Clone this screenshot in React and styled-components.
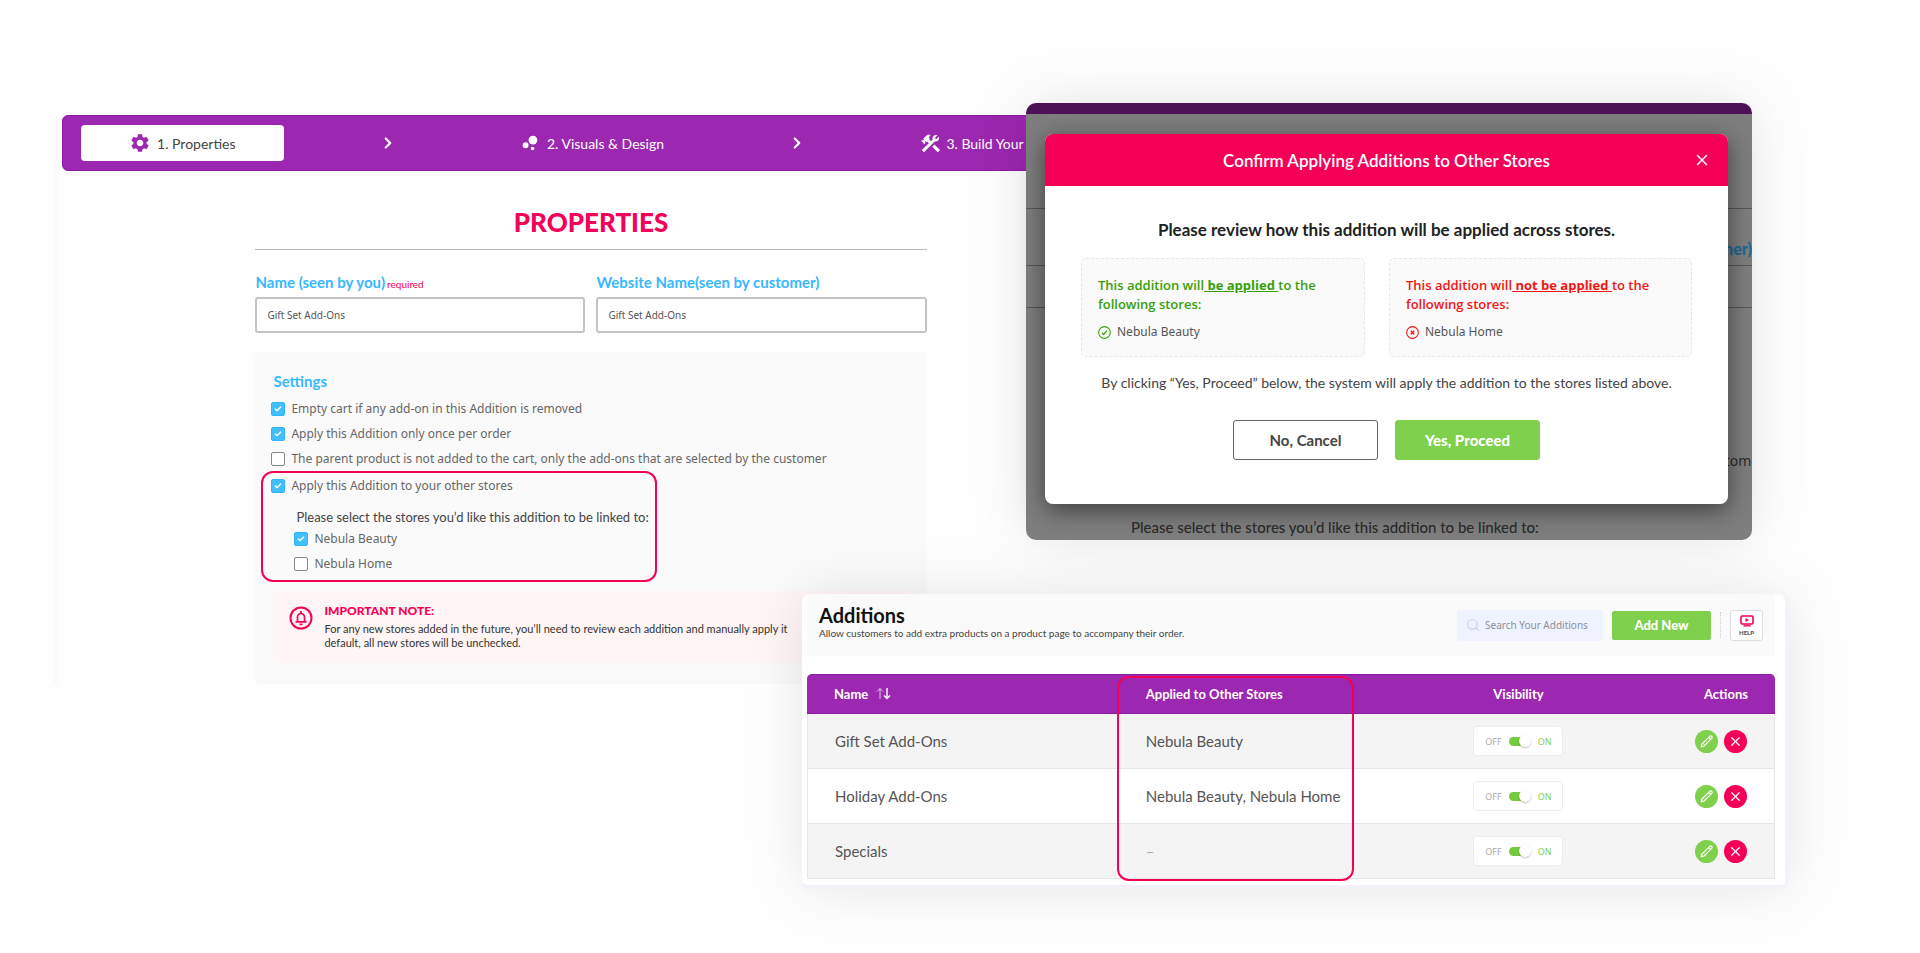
import React, { useState } from 'react';
import styled, { createGlobalStyle, css } from 'styled-components';
import { MdSettings, MdBubbleChart } from 'react-icons/md';
import { Check, ChevronRight, Search, X } from 'lucide-react';

const GlobalStyle = createGlobalStyle`
	* {
		box-sizing: border-box;
	}

	body {
		margin: 0;
		background: #fefefe;
		color: #444;
		font-family: Lato, 'Liberation Sans', sans-serif;
	}

	h1,
	h2,
	h3,
	p {
		margin: 0;
	}

	button,
	input {
		font-family: inherit;
	}
`;

const ui = "'Noto Sans', 'Open Sans', sans-serif";
const pink = '#f50057';
const purple = '#9c27b0';
const blue = '#38b8ff';
const green = '#7ed04d';

/* The three windows share one grid so that they can overlap. */
const Collage = styled.main`
	display: grid;
	grid-template-columns: 53fr 749fr 224fr 94fr 632fr 37fr 131fr;
	grid-template-rows: auto auto;
	row-gap: 54px;
	align-items: start;
	padding: 103px 0 64px;
	overflow: hidden;
`;

/* ---------- Properties ---------- */

const PropertiesPanel = styled.section`
	grid-column: 2 / 5;
	grid-row: 1 / 3;
	margin-top: 12px;
	padding: 0 0 2px 3px;
	border-left: 6px solid #fbfbfb;
	border-radius: 6px;
	background: #fefefe;
`;

const Steps = styled.nav`
	display: grid;
	grid-template-columns: repeat(5, 1fr);
	align-items: center;
	height: 56px;
	padding: 0 15px 0 18px;
	border: 1px solid #8e1aa3;
	border-radius: 6px;
	background: ${purple};
`;

const Step = styled.button`
	display: flex;
	align-items: center;
	justify-content: ${(p) => (p.$start ? 'flex-start' : 'center')};
	gap: 6px;
	height: 36px;
	margin-right: 2px;
	padding: 0 ${(p) => (p.$start ? 22 : 0)}px;
	border: 0;
	border-radius: 4px;
	background: ${(p) => (p.$active ? '#fff' : 'transparent')};
	color: ${(p) => (p.$active ? '#444' : '#fff')};
	font-size: 14px;
	white-space: nowrap;
`;

const Arrow = styled(ChevronRight)`
	justify-self: center;
	color: #fff;
`;

const Form = styled.form`
	width: 64%;
	margin: 0 auto;
	padding: 0 3px;
`;

const PageTitle = styled.h1`
	padding: 38px 0 13px;
	border-bottom: 1px solid #bbb;
	color: ${pink};
	font-size: 26px;
	line-height: 27px;
	font-weight: 900;
	text-align: center;
`;

const Fields = styled.div`
	display: grid;
	grid-template-columns: 1fr 1fr;
	gap: 11px;
	margin: 23px 0 19px;
`;

const Label = styled.label`
	display: block;
	height: 24px;
	color: ${blue};
	font-size: 15px;
	line-height: 18px;
	font-weight: 700;
`;

const Required = styled.span`
	color: ${pink};
	font-size: 10px;
	font-weight: 400;
	margin-left: 2px;
`;

const TextInput = styled.input`
	display: block;
	width: 100%;
	height: 36px;
	padding: 0 10px;
	border: 2px solid #c4c4c4;
	border-radius: 3px;
	background: #fff;
	color: #555;
	font-family: ${ui};
	font-size: 10px;
`;

const SettingsCard = styled.div`
	padding: 20px 18px 21px;
	border-radius: 5px;
	background: #fafafa;
`;

const CardTitle = styled.h2`
	margin-bottom: 6px;
	color: ${blue};
	font-size: 15px;
	line-height: 18px;
	font-weight: 700;
`;

const CheckRow = styled.label`
	position: relative;
	display: flex;
	align-items: center;
	gap: 6px;
	height: 25px;
	margin-left: -2px;
	color: #666;
	font-family: ${ui};
	font-size: 12px;
	white-space: nowrap;
`;

const Box = styled.input`
	appearance: none;
	width: 14px;
	height: 14px;
	margin: 0;
	border: 1px solid #888;
	border-radius: 2px;
	background: #fff;

	&:checked {
		border-color: #2fb5fa;
		background: #42bfff;
	}
`;

const Tick = styled(Check)`
	position: absolute;
	left: 3px;
	color: #fff;
`;

const Outlined = styled.div`
	width: 396px;
	margin: 0 0 9px -12px;
	padding: 0 10px 4px;
	border: 2px solid ${pink};
	border-radius: 12px;
`;

const StoreList = styled.div`
	padding: 11px 0 0 23px;
`;

const StoreHint = styled.p`
	font-size: 13px;
	line-height: 17px;
	white-space: nowrap;
`;

const Note = styled.aside`
	display: flex;
	gap: 11px;
	padding: 13px 16px 13px;
	background: #fff5f4;
	color: #333;
	font-size: 11px;
	line-height: 14px;

	svg {
		flex: none;
		margin-top: 2px;
	}
`;

const NoteTitle = styled.h3`
	color: ${pink};
	font-size: 12px;
	line-height: 14px;
	font-weight: 900;
	margin-bottom: 4px;
`;

/* ---------- Confirm dialog ---------- */

const ConfirmPanel = styled.section`
	position: relative;
	grid-column: 4 / 6;
	grid-row: 1;
	padding: 31px 24px 36px 19px;
	border-radius: 10px;
	background: linear-gradient(#4d1156 11px, #7e7e7e 11px);
	box-shadow: 0 0 60px rgba(0, 0, 0, 0.1);
`;

const Backdrop = styled.div`
	position: absolute;
	inset: 0;
	overflow: hidden;
	border-radius: 10px;
	color: #2b2b2b;
	font-size: 15px;
	font-weight: 500;

	p {
		padding-left: 105px;
	}
`;

const BackdropRule = styled.div`
	height: ${(p) => p.$height}px;
	border-bottom: 1px solid #555;
`;

const BackdropLabel = styled.div`
	height: 57px;
	padding-top: 30px;
	border-bottom: 1px solid #555;
	color: #1c6a92;
	font-size: 16px;
	font-weight: 900;
	line-height: 20px;
	text-align: right;
`;

const BackdropText = styled.div`
	height: 210px;
	margin-right: -13px;
	padding-top: 143px;
	font-family: ${ui};
	font-weight: 400;
	font-size: 14px;
	line-height: 20px;
	text-align: right;
`;

const Dialog = styled.div`
	position: relative;
	overflow: hidden;
	border-radius: 8px;
	background: #fff;
	text-align: center;
`;

const DialogShadow = styled.div`
	position: relative;
	border-radius: 8px;
	box-shadow: 0 6px 24px rgba(0, 0, 0, 0.5);
`;

const DialogHeader = styled.header`
	display: flex;
	align-items: center;
	height: 52px;
	padding: 0 17px 0 35px;
	background: ${pink};
	color: #fff;

	h2 {
		flex: 1;
		font-size: 17px;
		font-weight: 600;
	}
`;

const IconButton = styled.button`
	display: flex;
	padding: 0;
	border: 0;
	background: none;
	color: inherit;
`;

const DialogBody = styled.div`
	padding: 34px 36px 44px;
`;

const Lead = styled.p`
	color: #222;
	font-size: 17px;
	line-height: 20px;
	font-weight: 700;
`;

const Results = styled.div`
	display: grid;
	grid-template-columns: 283fr 302fr;
	gap: 24px;
	margin: 18px 0 17px;
`;

const Result = styled.div`
	padding: 17px 16px 15px;
	border: 1px dashed #e8e8e8;
	border-radius: 5px;
	background: #fafafa;
	color: ${(p) => p.$color};
	font-family: ${ui};
	text-align: left;

	h3 {
		font-family: 'Open Sans', 'Noto Sans', sans-serif;
		font-size: 13px;
		line-height: 19px;
		font-weight: 600;
	}

	u {
		font-weight: 700;
	}

	p {
		display: flex;
		align-items: center;
		gap: 6px;
		margin-top: 9px;
		font-size: 12px;
		line-height: 18px;
	}

	span {
		color: #555;
	}
`;

const Explain = styled.p`
	font-size: 14px;
	line-height: 18px;
`;

const DialogActions = styled.div`
	display: flex;
	justify-content: center;
	gap: 17px;
	margin-top: 28px;
`;

const Button = styled.button`
	width: 145px;
	height: 40px;
	border: 1px solid #666;
	border-radius: 3px;
	background: #fff;
	color: #444;
	font-size: 15px;
	font-weight: 700;

	${(p) =>
		p.$primary &&
		css`
			border-color: ${green};
			background: ${green};
			color: #fff;
			font-weight: 900;
		`}
`;

/* ---------- Additions ---------- */

const AdditionsPanel = styled.section`
	position: relative;
	grid-column: 3 / 7;
	grid-row: 2;
	padding: 0 10px 6px 5px;
	border: solid #f2f3f8;
	border-width: 0 4px 4px 0;
	border-radius: 8px;
	background: #fff;
	box-shadow: 0 0 60px rgba(0, 0, 0, 0.1);
`;

const AdditionsHeader = styled.header`
	display: flex;
	align-items: center;
	justify-content: space-between;
	height: 62px;
	margin-bottom: 18px;
	padding: 0 12px;
	border-radius: 5px 0 0;
	background: #fafafa;

	h2 {
		color: #111;
		font-size: 20px;
		line-height: 22px;
		font-weight: 700;
	}

	p {
		margin-bottom: 6px;
		font-size: 10px;
		line-height: 14px;
	}
`;

const Tools = styled.div`
	display: flex;
	align-items: center;
	gap: 9px;
`;

const SearchBox = styled.label`
	display: flex;
	align-items: center;
	gap: 5px;
	width: 146px;
	height: 31px;
	padding: 0 9px;
	border-radius: 2px;
	background: #eff2ff;
	color: #cdd2e6;

	svg {
		flex: none;
	}

	input {
		flex: 1;
		min-width: 0;
		padding: 0;
		border: 0;
		background: none;
		font-family: ${ui};
		font-size: 10px;
	}

	input::placeholder {
		color: #8c919c;
	}
`;

const AddButton = styled(Button)`
	width: 99px;
	height: 29px;
	border-radius: 2px;
	font-size: 13px;
`;

const Divider = styled.div`
	height: 26px;
	border-left: 1px dotted #ccc;
`;

const HelpButton = styled.button`
	display: flex;
	flex-direction: column;
	align-items: center;
	justify-content: center;
	gap: 2px;
	width: 33px;
	height: 31px;
	padding: 0;
	border: 1px solid #ddd;
	border-radius: 3px;
	background: #fff;
	color: #555;
	font-size: 6px;
	line-height: 7px;
	font-weight: 900;
`;

const Table = styled.table`
	width: 100%;
	border-spacing: 0;
	table-layout: fixed;

	th {
		height: 40px;
		padding: 0 0 1px;
		border: solid #8e1aa3;
		border-width: 1px 0;
		background: ${purple};
		color: #fff;
		font-size: 13px;
		font-weight: 700;
		text-align: left;
	}

	th:first-child {
		border-top-left-radius: 5px;
	}

	th:last-child {
		border-top-right-radius: 5px;
	}

	td {
		height: 55px;
		padding: 0;
		border-bottom: 1px solid #e6e6e6;
		color: #555;
		font-size: 15px;
	}

	tbody tr:nth-child(odd) {
		background: #f4f4f4;
	}

	th:first-child,
	td:first-child {
		padding-left: 27px;
	}

	td:first-child {
		border-left: 1px solid #e6e6e6;
	}

	td:last-child {
		border-right: 1px solid #e6e6e6;
	}

	th:nth-child(3),
	td:nth-child(3) {
		text-align: center;
	}

	th:last-child,
	td:last-child {
		padding-right: 27px;
		text-align: right;
	}
`;

const NameHead = styled.span`
	display: flex;
	align-items: center;
	gap: 8px;
`;

const Muted = styled.span`
	color: #aaa;
`;

const Toggle = styled.label`
	display: inline-flex;
	align-items: center;
	justify-content: center;
	gap: 7px;
	width: 90px;
	height: 30px;
	border: 1px solid #ececec;
	border-radius: 4px;
	background: #fff;
	color: #aaa;
	font-family: ${ui};
	font-size: 9px;
	vertical-align: middle;
`;

const On = styled.span`
	color: ${green};
`;

const Switch = styled.input`
	appearance: none;
	display: flex;
	align-items: center;
	justify-content: ${(p) => (p.checked ? 'flex-end' : 'flex-start')};
	width: 22px;
	height: 9px;
	margin: 0;
	border-radius: 5px;
	background: linear-gradient(90deg, ${(p) => (p.checked ? '#72cc3d' : '#ccc')} 16px, transparent 16px);

	&::before {
		content: '';
		width: 12px;
		height: 12px;
		border-radius: 50%;
		background: #fff;
		box-shadow: 0 1px 2px rgba(0, 0, 0, 0.25);
	}
`;

const RowActions = styled.div`
	display: flex;
	justify-content: flex-end;
	gap: 6px;
`;

const RoundButton = styled.button`
	display: flex;
	align-items: center;
	justify-content: center;
	width: 23px;
	height: 23px;
	padding: 0;
	border: 0;
	border-radius: 50%;
	background: ${(p) => p.$color};
	color: #fff;
`;

const ColumnOutline = styled.div`
	position: absolute;
	left: 32%;
	top: 82px;
	bottom: 4px;
	width: 237px;
	border: 2px solid ${pink};
	border-radius: 12px;
	pointer-events: none;
`;

const ToolsIcon = () => (
	<svg width="19" height="19" viewBox="2 2 20 20" fill="currentColor" aria-hidden="true">
		<path d="M13.800 15.300l2.300-2.300 5.900 5.900-2.300 2.300z" />
		<path d="M17.600 10c1.900 0 3.500-1.600 3.500-3.500 0-.6-.2-1.100-.4-1.600L18 7.600 16.500 6.100l2.700-2.700c-.5-.2-1-.4-1.600-.4-1.900 0-3.500 1.600-3.500 3.500 0 .4.100.8.200 1.200l-1.800 1.800-1.800-1.800.7-.7L10 5.600l2.100-2.100a3 3 0 0 0-4.200 0L4.300 7.100l1.400 1.400H2.900l-.7.7 3.500 3.500.7-.7V9.200l1.400 1.400.7-.7 1.800 1.800L2.800 18.900l2.300 2.300L16.400 9.800c.4.100.8.200 1.200.2z" />
	</svg>
);

const BellIcon = () => (
	<svg width="24" height="24" viewBox="0 0 24 24" fill="none" stroke={pink} strokeWidth="2" aria-hidden="true">
		<circle cx="12" cy="12" r="10.500" />
		<path d="M6.500 15.800h11M8.500 15.500v-4.500a3.500 3.500 0 0 1 7 0v4.500" strokeWidth="1.700" />
		<path d="M12 5v2.500M10.500 18.400h3" strokeWidth="1.800" />
	</svg>
);

const HelpIcon = () => (
	<svg width="14" height="12" viewBox="0 0 14 12" fill="none" aria-hidden="true">
		<rect x="1" y="1" width="12" height="8" rx="1" stroke={pink} strokeWidth="1.600" />
		<path d="M5.500 3v4l3.500-2z" fill={pink} />
		<path d="M3.500 10.800h7" stroke={pink} strokeWidth="1.400" />
	</svg>
);

const SortIcon = () => (
	<svg width="15" height="13" viewBox="0 0 15 13" fill="none" stroke="#fff" aria-hidden="true">
		<path d="M4 12V1.500M1 4.500l3-3 3 3" opacity="0.7" />
		<path d="M11 1v10.500M8 8.500l3 3 3-3" strokeWidth="1.400" />
	</svg>
);

const PencilIcon = () => (
	<svg width="13" height="13" viewBox="0 0 13 13" fill="none" stroke="#fff" strokeWidth="1.200" strokeLinejoin="round" aria-hidden="true">
		<path d="M1.200 11.800l.8-2.800L9.700 1.300a1.200 1.200 0 0 1 2 2L4 11zM8.600 2.400l2 2" />
	</svg>
);

const StatusIcon = ({ ok }) => (
	<svg width="13" height="13" viewBox="0 0 12 12" fill="none" stroke="currentColor" aria-hidden="true">
		<circle cx="6" cy="6" r="5.400" />
		{ok ? <path d="M3.700 6.300l1.500 1.500 3-3.600" strokeWidth="1.200" /> : <path d="M4.400 4.400l3.200 3.200M7.600 4.400L4.400 7.600" strokeWidth="1.300" />}
	</svg>
);

const CheckItem = ({ children, initial = false }) => {
	const [checked, setChecked] = useState(initial);

	return (
		<CheckRow>
			<Box
				type="checkbox"
				checked={checked}
				onChange={(e) => setChecked(e.target.checked)}
			/>
			{checked && <Tick size={8} strokeWidth={4} />}
			{children}
		</CheckRow>
	);
};

const VisibilityToggle = () => {
	const [on, setOn] = useState(true);

	return (
		<Toggle>
			OFF
			<Switch type="checkbox" checked={on} onChange={(e) => setOn(e.target.checked)} />
			<On>ON</On>
		</Toggle>
	);
};

const Properties = () => (
	<PropertiesPanel>
		<Steps>
			<Step $active>
				<MdSettings size={22} color={purple} />
				1. Properties
			</Step>
			<Arrow size={18} strokeWidth={3} />
			<Step>
				<MdBubbleChart size={22} />
				2. Visuals &amp; Design
			</Step>
			<Arrow size={18} strokeWidth={3} />
			<Step $start>
				<ToolsIcon />
				3. Build Your
			</Step>
		</Steps>
		<Form>
			<PageTitle>PROPERTIES</PageTitle>
			<Fields>
				<div>
					<Label htmlFor="name">
						Name (seen by you)
						<Required>required</Required>
					</Label>
					<TextInput id="name" defaultValue="Gift Set Add-Ons" />
				</div>
				<div>
					<Label htmlFor="website-name">Website Name(seen by customer)</Label>
					<TextInput id="website-name" defaultValue="Gift Set Add-Ons" />
				</div>
			</Fields>
			<SettingsCard>
				<CardTitle>Settings</CardTitle>
				<CheckItem initial>Empty cart if any add-on in this Addition is removed</CheckItem>
				<CheckItem initial>Apply this Addition only once per order</CheckItem>
				<CheckItem>
					The parent product is not added to the cart, only the add-ons that are selected by the customer
				</CheckItem>
				<Outlined>
					<CheckItem initial>Apply this Addition to your other stores</CheckItem>
					<StoreList>
						<StoreHint>Please select the stores you’d like this addition to be linked to:</StoreHint>
						<CheckItem initial>Nebula Beauty</CheckItem>
						<CheckItem>Nebula Home</CheckItem>
					</StoreList>
				</Outlined>
				<Note>
					<BellIcon />
					<div>
						<NoteTitle>IMPORTANT NOTE:</NoteTitle>
						<p>
							For any new stores added in the future, you’ll need to review each addition and manually apply it
							<br />
							default, all new stores will be unchecked.
						</p>
					</div>
				</Note>
			</SettingsCard>
		</Form>
	</PropertiesPanel>
);

const ConfirmDialog = () => (
	<ConfirmPanel>
		<Backdrop>
			<BackdropRule $height={106} />
			<BackdropLabel>mer)</BackdropLabel>
			<BackdropRule $height={42} />
			<BackdropText>tomer</BackdropText>
			<p>Please select the stores you’d like this addition to be linked to:</p>
		</Backdrop>
		<DialogShadow>
			<Dialog role="dialog" aria-labelledby="confirm-title">
				<DialogHeader>
					<h2 id="confirm-title">Confirm Applying Additions to Other Stores</h2>
					<IconButton aria-label="Close">
						<X size={18} strokeWidth={2} />
					</IconButton>
				</DialogHeader>
				<DialogBody>
					<Lead>Please review how this addition will be applied across stores.</Lead>
					<Results>
						<Result $color="#38a009">
							<h3>
								This addition will<u> be applied </u>to the following stores:
							</h3>
							<p>
								<StatusIcon ok />
								<span>Nebula Beauty</span>
							</p>
						</Result>
						<Result $color="#f41414">
							<h3>
								This addition will<u> not be applied </u>to the following stores:
							</h3>
							<p>
								<StatusIcon />
								<span>Nebula Home</span>
							</p>
						</Result>
					</Results>
					<Explain>
						By clicking “Yes, Proceed” below, the system will apply the addition to the stores listed above.
					</Explain>
					<DialogActions>
						<Button>No, Cancel</Button>
						<Button $primary>Yes, Proceed</Button>
					</DialogActions>
				</DialogBody>
			</Dialog>
		</DialogShadow>
	</ConfirmPanel>
);

const additions = [
	{ name: 'Gift Set Add-Ons', stores: 'Nebula Beauty' },
	{ name: 'Holiday Add-Ons', stores: 'Nebula Beauty, Nebula Home' },
	{ name: 'Specials', stores: '' },
];

const Additions = () => (
	<AdditionsPanel>
		<AdditionsHeader>
			<div>
				<h2>Additions</h2>
				<p>Allow customers to add extra products on a product page to accompany their order.</p>
			</div>
			<Tools>
				<SearchBox>
					<Search size={14} strokeWidth={2} />
					<input type="text" aria-label="Search" placeholder="Search Your Additions" />
				</SearchBox>
				<AddButton $primary>Add New</AddButton>
				<Divider />
				<HelpButton>
					<HelpIcon />
					HELP
				</HelpButton>
			</Tools>
		</AdditionsHeader>
		<Table>
			<colgroup>
				<col width="35%" />
				<col width="27%" />
				<col width="23%" />
				<col width="15%" />
			</colgroup>
			<thead>
				<tr>
					<th>
						<NameHead>
							Name
							<SortIcon />
						</NameHead>
					</th>
					<th>Applied to Other Stores</th>
					<th>Visibility</th>
					<th>Actions</th>
				</tr>
			</thead>
			<tbody>
				{additions.map((addition) => (
					<tr key={addition.name}>
						<td>{addition.name}</td>
						<td>{addition.stores || <Muted>–</Muted>}</td>
						<td>
							<VisibilityToggle />
						</td>
						<td>
							<RowActions>
								<RoundButton $color={green} aria-label="Edit">
									<PencilIcon />
								</RoundButton>
								<RoundButton $color={pink} aria-label="Delete">
									<X size={15} strokeWidth={2} />
								</RoundButton>
							</RowActions>
						</td>
					</tr>
				))}
			</tbody>
		</Table>
		<ColumnOutline />
	</AdditionsPanel>
);

const App = () => (
	<>
		<GlobalStyle />
		<Collage>
			<Properties />
			<ConfirmDialog />
			<Additions />
		</Collage>
	</>
);

export default App;
